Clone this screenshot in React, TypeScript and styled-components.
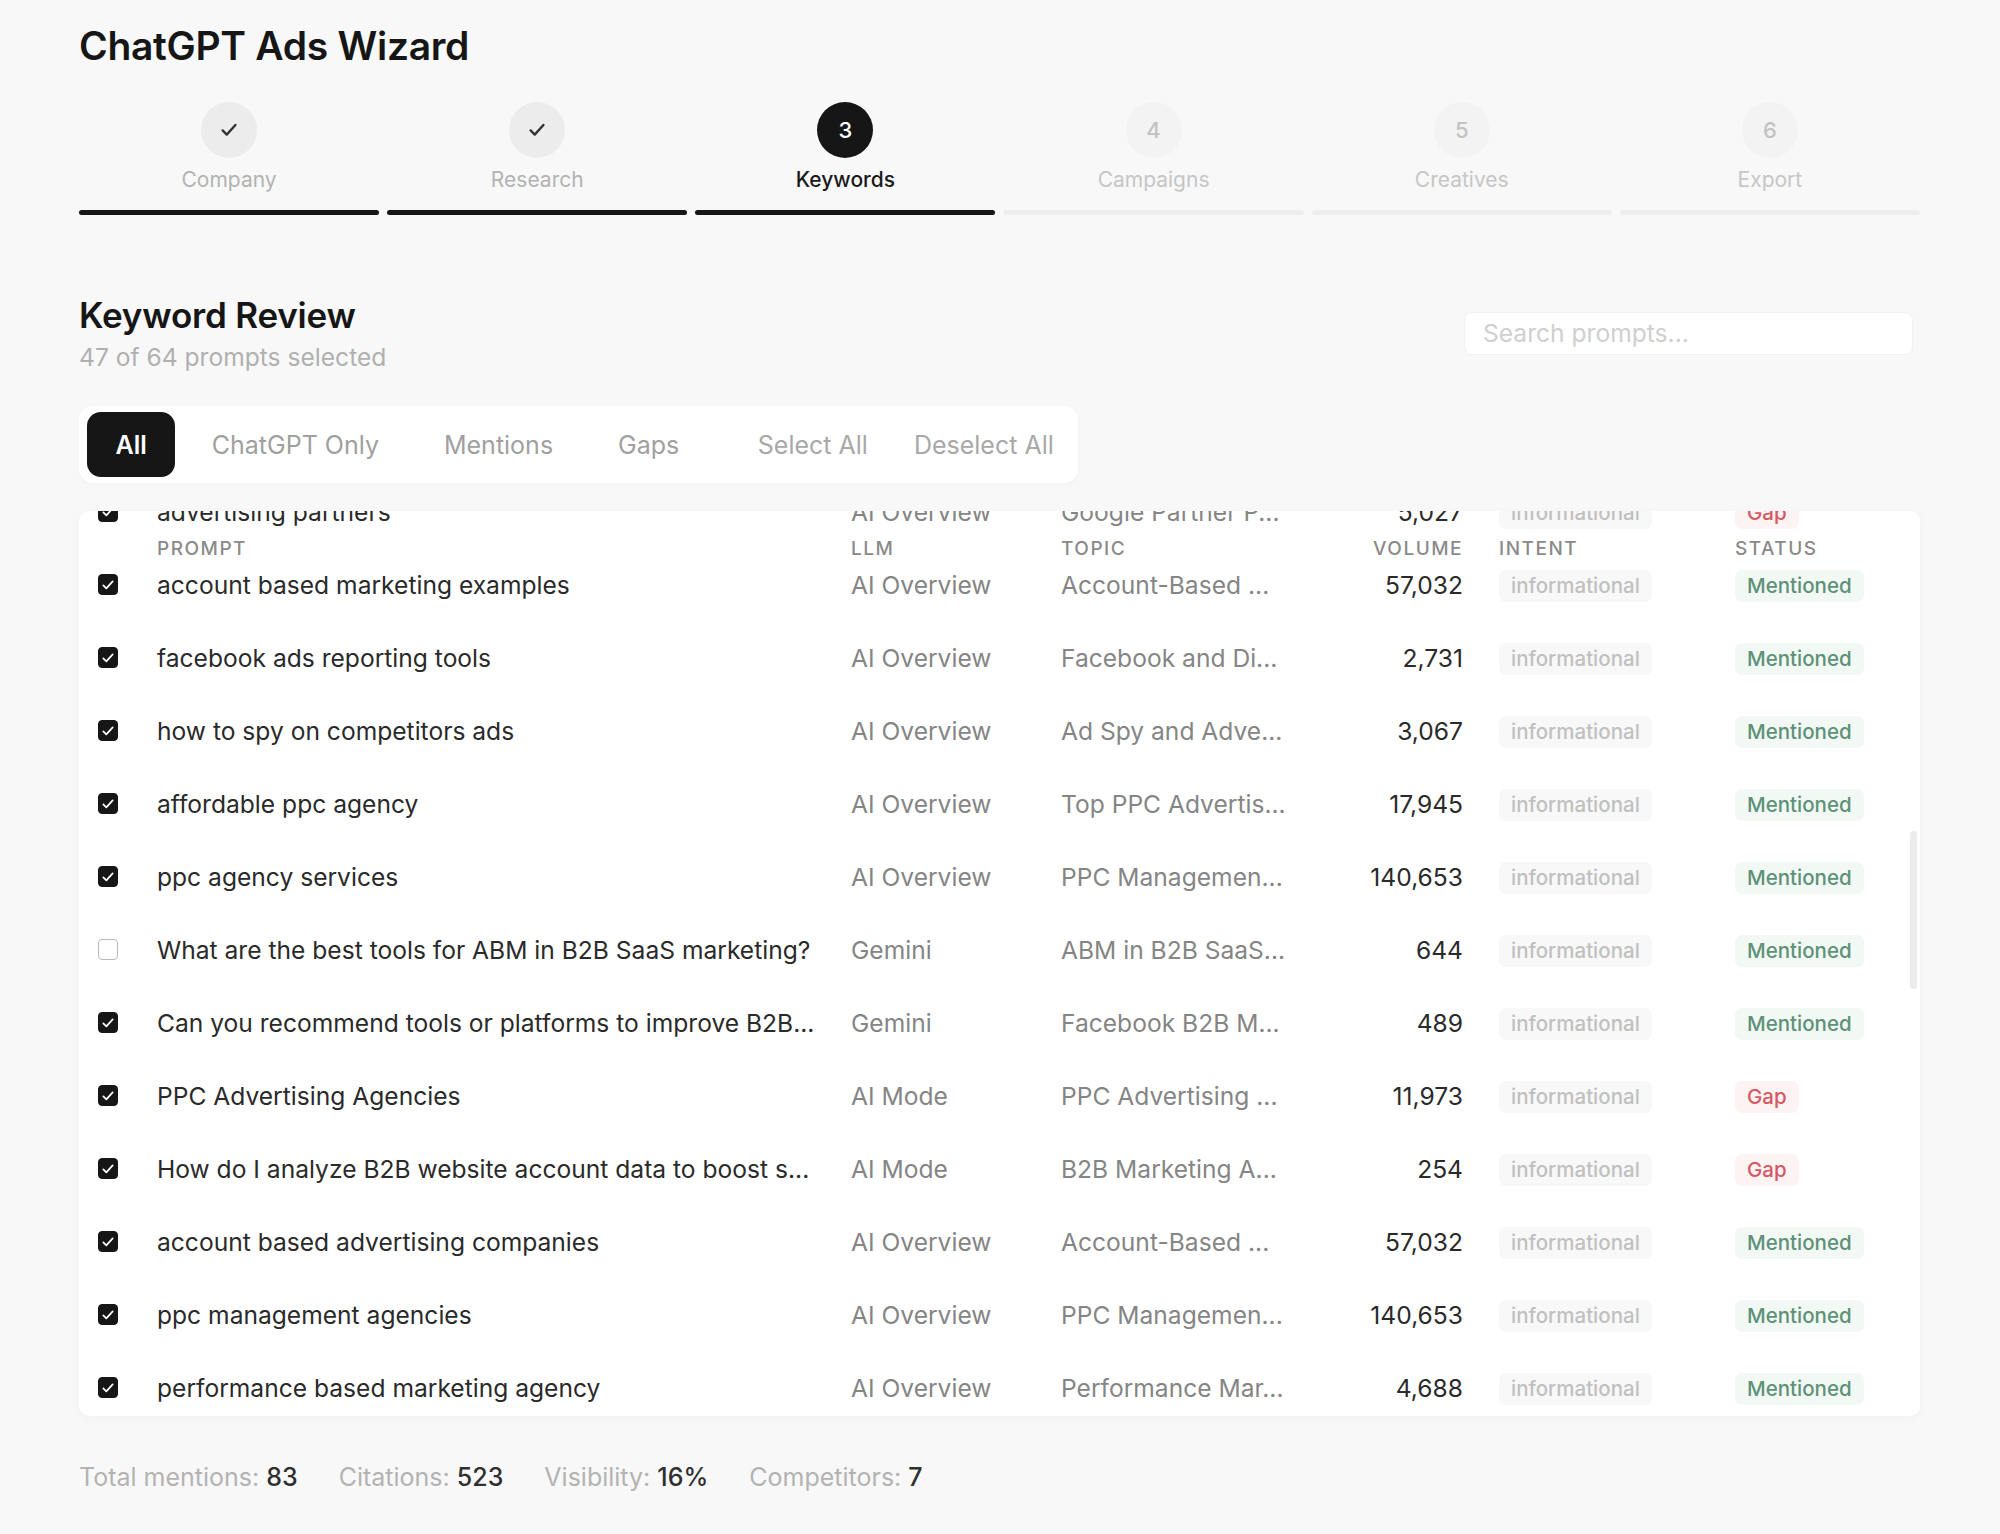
import React, { useLayoutEffect, useRef } from "react";
import styled, { createGlobalStyle } from "styled-components";

const GlobalStyle = createGlobalStyle`
  html, body {
    margin: 0;
    padding: 0;
    background: #f8f8f8;
  }
  body {
    font-family: "Inter", "Liberation Sans", sans-serif;
    color: #1a1a1a;
    -webkit-font-smoothing: antialiased;
  }
  * { box-sizing: border-box; }
`;

const Page = styled.div`
  padding: 22px 80px 40px 79px;
`;

const Title = styled.h1`
  margin: 0;
  font-size: 39px;
  line-height: 48px;
  font-weight: 600;
  color: #161616;
  letter-spacing: -0.3px;
`;

/* ---------- stepper ---------- */

const Steps = styled.div`
  display: grid;
  grid-template-columns: repeat(6, 1fr);
  gap: 8px;
  margin-top: 32px;
`;

const Step = styled.div`
  display: flex;
  flex-direction: column;
  align-items: center;
`;

type StepState = "done" | "active" | "todo";

const Circle = styled.div<{ $state: StepState }>`
  width: 56px;
  height: 56px;
  border-radius: 50%;
  display: flex;
  align-items: center;
  justify-content: center;
  font-size: 22px;
  font-weight: 500;
  background: ${(p) => (p.$state === "active" ? "#161616" : p.$state === "done" ? "#ececec" : "#f3f3f3")};
  color: ${(p) => (p.$state === "active" ? "#fff" : "#c2c2c2")};
`;

const StepLabel = styled.div<{ $state: StepState }>`
  margin-top: 8px;
  font-size: 21px;
  line-height: 28px;
  font-weight: ${(p) => (p.$state === "active" ? 500 : 400)};
  color: ${(p) => (p.$state === "active" ? "#1a1a1a" : p.$state === "done" ? "#b3b3b3" : "#c6c6c6")};
`;

const StepBar = styled.div<{ $on: boolean }>`
  margin-top: 16px;
  width: 100%;
  height: 5px;
  border-radius: 3px;
  background: ${(p) => (p.$on ? "#161616" : "#eeeeee")};
`;

/* ---------- review header ---------- */

const ReviewHead = styled.div`
  display: flex;
  justify-content: space-between;
  align-items: center;
  margin-top: 78px;
`;

const H2 = styled.h2`
  margin: 0;
  font-size: 35px;
  line-height: 44px;
  font-weight: 600;
  color: #161616;
  letter-spacing: -0.2px;
`;

const Sub = styled.div`
  margin-top: 4px;
  font-size: 24.6px;
  line-height: 32px;
  color: #b0b0b0;
`;

const Search = styled.input`
  width: 449px;
  height: 43px;
  margin-right: 7px;
  padding: 0 18px;
  border: 1px solid #f2f2f2;
  border-radius: 8px;
  background: #fff;
  font-family: inherit;
  font-size: 24.6px;
  color: #333;
  outline: none;
  &::placeholder { color: #cfcfcf; }
`;

/* ---------- filters ---------- */

const FilterBar = styled.div`
  display: inline-flex;
  align-items: center;
  gap: 8px;
  margin-top: 33px;
  padding: 6px 1px 6px 8px;
  background: #fff;
  border-radius: 14px;
  box-shadow: 0 1px 4px rgba(0, 0, 0, 0.03);
`;

const Tab = styled.button<{ $active?: boolean }>`
  height: 65px;
  padding: 0 28.5px;
  border: none;
  border-radius: 14px;
  font-family: inherit;
  font-size: 25px;
  font-weight: ${(p) => (p.$active ? 600 : 400)};
  background: ${(p) => (p.$active ? "#161616" : "transparent")};
  color: ${(p) => (p.$active ? "#fff" : "#a0a0a0")};
  cursor: pointer;
`;

const Actions = styled.div`
  display: flex;
  margin-left: 19px;
`;

const ActionBtn = styled.button`
  height: 65px;
  padding: 0 23px;
  border: none;
  background: transparent;
  font-family: inherit;
  font-size: 25px;
  color: #a8a8a8;
  cursor: pointer;
`;

/* ---------- table ---------- */

const Card = styled.div`
  position: relative;
  margin-top: 28px;
  height: 905px;
  background: #fff;
  border-radius: 10px;
  overflow: hidden;
  box-shadow: 0 2px 8px rgba(0, 0, 0, 0.035);
`;

const Scroller = styled.div`
  height: 100%;
  overflow-y: auto;
  scrollbar-width: none;
  &::-webkit-scrollbar { display: none; }
`;

// drawn thumb: headless shots hide native scrollbars
const Thumb = styled.div`
  position: absolute;
  right: 3px;
  top: 320px;
  width: 7px;
  height: 158px;
  border-radius: 4px;
  background: #ebebeb;
`;

const cols = "59px 694px 210px 279px 159px 236px 1fr";

const HeadRow = styled.div`
  position: sticky;
  top: 22px;
  z-index: 1;
  display: grid;
  grid-template-columns: ${cols};
  align-items: center;
  height: 30px;
  padding-left: 19px;
  background: #fff;
`;

const HeadCell = styled.div<{ $right?: boolean }>`
  font-size: 19px;
  font-weight: 500;
  letter-spacing: 1.5px;
  text-transform: uppercase;
  color: #8a8a8a;
  text-align: ${(p) => (p.$right ? "right" : "left")};
  padding-right: ${(p) => (p.$right ? "36px" : "0")};
`;

const Row = styled.div`
  display: grid;
  grid-template-columns: ${cols};
  align-items: center;
  height: 73px;
  padding-left: 19px;
`;

const Check = styled.span<{ $on: boolean }>`
  width: 20px;
  height: 21px;
  border-radius: 4px;
  display: flex;
  align-items: center;
  justify-content: center;
  background: ${(p) => (p.$on ? "#161616" : "#fff")};
  border: 1.5px solid ${(p) => (p.$on ? "#161616" : "#b9b9b9")};
`;

const Cell = styled.div<{ $tone?: "dark" | "muted" }>`
  font-size: 24.6px;
  line-height: 32px;
  white-space: nowrap;
  overflow: hidden;
  color: ${(p) => (p.$tone === "muted" ? "#858585" : "#2a2a2a")};
`;

const Volume = styled.div`
  font-size: 24.6px;
  line-height: 32px;
  text-align: right;
  padding-right: 36px;
  color: #2a2a2a;
`;

type Tone = "intent" | "mentioned" | "gap";

const Badge = styled.span<{ $tone: Tone }>`
  justify-self: start;
  display: inline-block;
  margin-top: 3px;
  padding: 2px 12px;
  border-radius: 7px;
  font-size: 20.5px;
  line-height: 28px;
  font-weight: 500;
  background: ${(p) => (p.$tone === "intent" ? "#f8f8f8" : p.$tone === "mentioned" ? "#f2f8f4" : "#fdf3f3")};
  color: ${(p) => (p.$tone === "intent" ? "#c0c0c0" : p.$tone === "mentioned" ? "#5d9178" : "#d45963")};
`;

/* ---------- footer ---------- */

const Stats = styled.div`
  display: flex;
  gap: 41px;
  margin-top: 45px;
  font-size: 25px;
  line-height: 32px;
`;

const StatLabel = styled.span`
  color: #b3b3b3;
`;

const StatValue = styled.span`
  color: #2f2f2f;
  font-weight: 500;
`;

/* ---------- data ---------- */

type Kw = {
  prompt: string;
  llm: string;
  topic: string;
  volume: string;
  status: "Mentioned" | "Gap";
  on: boolean;
};

const visible: Kw[] = [
  { prompt: "advertising partners", llm: "AI Overview", topic: "Google Partner P...", volume: "5,027", status: "Gap", on: true },
  { prompt: "account based marketing examples", llm: "AI Overview", topic: "Account-Based ...", volume: "57,032", status: "Mentioned", on: true },
  { prompt: "facebook ads reporting tools", llm: "AI Overview", topic: "Facebook and Di...", volume: "2,731", status: "Mentioned", on: true },
  { prompt: "how to spy on competitors ads", llm: "AI Overview", topic: "Ad Spy and Adve...", volume: "3,067", status: "Mentioned", on: true },
  { prompt: "affordable ppc agency", llm: "AI Overview", topic: "Top PPC Advertis...", volume: "17,945", status: "Mentioned", on: true },
  { prompt: "ppc agency services", llm: "AI Overview", topic: "PPC Managemen...", volume: "140,653", status: "Mentioned", on: true },
  { prompt: "What are the best tools for ABM in B2B SaaS marketing?", llm: "Gemini", topic: "ABM in B2B SaaS...", volume: "644", status: "Mentioned", on: false },
  { prompt: "Can you recommend tools or platforms to improve B2B...", llm: "Gemini", topic: "Facebook B2B M...", volume: "489", status: "Mentioned", on: true },
  { prompt: "PPC Advertising Agencies", llm: "AI Mode", topic: "PPC Advertising ...", volume: "11,973", status: "Gap", on: true },
  { prompt: "How do I analyze B2B website account data to boost s...", llm: "AI Mode", topic: "B2B Marketing A...", volume: "254", status: "Gap", on: true },
  { prompt: "account based advertising companies", llm: "AI Overview", topic: "Account-Based ...", volume: "57,032", status: "Mentioned", on: true },
  { prompt: "ppc management agencies", llm: "AI Overview", topic: "PPC Managemen...", volume: "140,653", status: "Mentioned", on: true },
  { prompt: "performance based marketing agency", llm: "AI Overview", topic: "Performance Mar...", volume: "4,688", status: "Mentioned", on: true },
];

// 64 prompts in total; the list is scrolled so that row 22 sits at the top
const FIRST = 22;
const keywords: Kw[] = Array.from({ length: 64 }, (_, i) => {
  const j = (((i - FIRST) % visible.length) + visible.length) % visible.length;
  return visible[j];
});

const steps: { n: number; label: string; state: StepState }[] = [
  { n: 1, label: "Company", state: "done" },
  { n: 2, label: "Research", state: "done" },
  { n: 3, label: "Keywords", state: "active" },
  { n: 4, label: "Campaigns", state: "todo" },
  { n: 5, label: "Creatives", state: "todo" },
  { n: 6, label: "Export", state: "todo" },
];

const CheckMark = ({ color, size }: { color: string; size: number }) => (
  <svg width={size} height={size} viewBox="0 0 24 24" fill="none">
    <path d="M5 12.5l4.5 4.5L19 6.5" stroke={color} strokeWidth={2.6} strokeLinecap="round" strokeLinejoin="round" />
  </svg>
);

export default function App() {
  const scrollRef = useRef<HTMLDivElement>(null);

  useLayoutEffect(() => {
    if (scrollRef.current) scrollRef.current.scrollTop = 30 + 73 * (FIRST + 1) - 37;
  }, []);

  return (
    <>
      <GlobalStyle />
      <Page>
        <Title>ChatGPT Ads Wizard</Title>

        <Steps>
          {steps.map((s) => (
            <Step key={s.n}>
              <Circle $state={s.state}>
                {s.state === "done" ? <CheckMark color="#333" size={22} /> : s.n}
              </Circle>
              <StepLabel $state={s.state}>{s.label}</StepLabel>
              <StepBar $on={s.state !== "todo"} />
            </Step>
          ))}
        </Steps>

        <ReviewHead>
          <div>
            <H2>Keyword Review</H2>
            <Sub>47 of 64 prompts selected</Sub>
          </div>
          <Search placeholder="Search prompts..." />
        </ReviewHead>

        <FilterBar>
          <Tab $active>All</Tab>
          <Tab>ChatGPT Only</Tab>
          <Tab>Mentions</Tab>
          <Tab>Gaps</Tab>
          <Actions>
            <ActionBtn>Select All</ActionBtn>
            <ActionBtn>Deselect All</ActionBtn>
          </Actions>
        </FilterBar>

        <Card>
          <Scroller ref={scrollRef}>
            <HeadRow>
              <span />
              <HeadCell>Prompt</HeadCell>
              <HeadCell>LLM</HeadCell>
              <HeadCell>Topic</HeadCell>
              <HeadCell $right>Volume</HeadCell>
              <HeadCell>Intent</HeadCell>
              <HeadCell>Status</HeadCell>
            </HeadRow>
            {keywords.map((k, i) => (
              <Row key={i}>
                <Check $on={k.on}>{k.on && <CheckMark color="#fff" size={16} />}</Check>
                <Cell>{k.prompt}</Cell>
                <Cell $tone="muted">{k.llm}</Cell>
                <Cell $tone="muted">{k.topic}</Cell>
                <Volume>{k.volume}</Volume>
                <Badge $tone="intent">informational</Badge>
                <Badge $tone={k.status === "Gap" ? "gap" : "mentioned"}>{k.status}</Badge>
              </Row>
            ))}
          </Scroller>
          <Thumb />
        </Card>

        <Stats>
          <span><StatLabel>Total mentions: </StatLabel><StatValue>83</StatValue></span>
          <span><StatLabel>Citations: </StatLabel><StatValue>523</StatValue></span>
          <span><StatLabel>Visibility: </StatLabel><StatValue>16%</StatValue></span>
          <span><StatLabel>Competitors: </StatLabel><StatValue>7</StatValue></span>
        </Stats>
      </Page>
    </>
  );
}
